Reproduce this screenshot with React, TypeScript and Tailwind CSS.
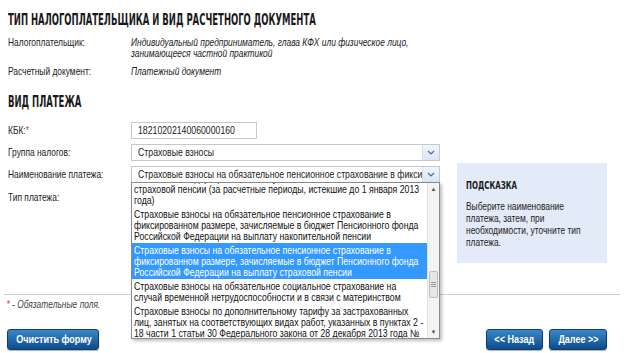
const sans = "font-['Liberation_Sans',Arial,sans-serif]";
const cond = "font-['Liberation_Sans_Narrow','DejaVu_Sans_Condensed',sans-serif] font-bold uppercase whitespace-nowrap origin-left";
// the page text is set narrower than Arial; squeeze each line from its left edge
const sq = "origin-left scale-x-[0.8] whitespace-nowrap";
const sqField = "origin-left scale-x-[0.83] whitespace-nowrap";

function Chevron() {
  return (
    <svg width="8" height="5" viewBox="0 0 8 5" className="block">
      <path d="M1 1 L4 4 L7 1" fill="none" stroke="#3b6ea8" strokeWidth="1.2" />
    </svg>
  );
}

function Select({ value }: { value: string }) {
  return (
    <div className="flex h-[17px] w-[309px] border border-[#c8c8c8] bg-white">
      <div className="flex-1 overflow-hidden pl-[6px] leading-[15px]">
        <div className={sqField}>{value}</div>
      </div>
      <div className="flex w-[17px] items-center justify-center border-l border-[#d4dce6] bg-gradient-to-b from-[#f0f5fb] to-[#dbe6f3]">
        <Chevron />
      </div>
    </div>
  );
}

type Item = { lines: string[]; active?: boolean };

const items: Item[] = [
  {
    lines: [
      "Российской Федерации на выплату",
      "страховой пенсии (за расчетные периоды, истекшие до 1 января 2013",
      "года)",
    ],
  },
  {
    lines: [
      "Страховые взносы на обязательное пенсионное страхование в",
      "фиксированном размере, зачисляемые в бюджет Пенсионного фонда",
      "Российской Федерации на выплату накопительной пенсии",
    ],
  },
  {
    lines: [
      "Страховые взносы на обязательное пенсионное страхование в",
      "фиксированном размере, зачисляемые в бюджет Пенсионного фонда",
      "Российской Федерации на выплату страховой пенсии",
    ],
    active: true,
  },
  {
    lines: [
      "Страховые взносы на обязательное социальное страхование на",
      "случай временной нетрудоспособности и в связи с материнством",
    ],
  },
  {
    lines: [
      "Страховые взносы по дополнительному тарифу за застрахованных",
      "лиц, занятых на соответствующих видах работ, указанных в пунктах 2 -",
      "18 части 1 статьи 30 Федерального закона от 28 декабря 2013 года №",
      "400-ФЗ",
    ],
  },
];

function Dropdown() {
  return (
    <div className="absolute left-0 top-[16px] z-10 flex h-[157px] w-[309px] border border-[#8a8a8a] bg-white shadow-[2px_2px_3px_rgba(0,0,0,0.25)]">
      <div className="flex-1 overflow-hidden">
        <div className="-mt-[12px]">
          {items.map((it, i) => (
            <div
              key={i}
              className={`px-[2px] py-[1.5px] leading-[11px] ${it.active ? "bg-[#3399ff] text-white" : "text-[#111]"}`}
            >
              {it.lines.map((l) => (
                <div key={l} className={sqField}>
                  {l}
                </div>
              ))}
            </div>
          ))}
        </div>
      </div>
      <div className="flex w-[12px] flex-col border-l border-[#e2e2e2] bg-[#f3f3f3]">
        <div className="flex h-[12px] items-center justify-center text-[6px] text-[#555]">▲</div>
        <div className="h-[76px]" />
        <div className="mx-[1px] flex h-[27px] flex-col items-center justify-center gap-[1px] rounded-[2px] border border-[#bdbdbd] bg-[#e6e6e6]">
          <div className="h-px w-[5px] bg-[#999]" />
          <div className="h-px w-[5px] bg-[#999]" />
          <div className="h-px w-[5px] bg-[#999]" />
        </div>
        <div className="flex-1" />
        <div className="flex h-[12px] items-center justify-center text-[6px] text-[#555]">▼</div>
      </div>
    </div>
  );
}

function BlueButton({ children, w }: { children: string; w: string }) {
  return (
    <button
      className={`${w} h-[21px] rounded-[3px] border border-[#0b3f74] bg-gradient-to-b from-[#3a87c9] to-[#0d4c8c] text-[11px] font-bold text-white shadow-[0_1px_1px_rgba(0,0,0,0.3)]`}
    >
      <span className="inline-block scale-x-[0.82] whitespace-nowrap">{children}</span>
    </button>
  );
}

export default function App() {
  return (
    <div className={`relative h-[353px] w-[624px] overflow-hidden bg-white text-[10.5px] text-[#222] ${sans}`}>
      <div className="px-[8px] pt-[11px]">
        <h1 className={`${cond} scale-x-[0.59] text-[16px] leading-[18px] text-[#1a1a1a]`}>
          Тип налогоплательщика и вид расчетного документа
        </h1>

        <div className="mt-[8px] grid grid-cols-[123px_1fr] gap-y-[7px] leading-[11px]">
          <div className={sq}>Налогоплательщик:</div>
          <div className="italic">
            <div className={sq}>Индивидуальный предприниматель, глава КФХ или физическое лицо,</div>
            <div className={sq}>занимающееся частной практикой</div>
          </div>
          <div className={sq}>Расчетный документ:</div>
          <div className={`${sq} italic`}>Платежный документ</div>
        </div>

        <h2 className={`${cond} mt-[16px] scale-x-[0.59] text-[16px] leading-[18px] text-[#1a1a1a]`}>
          Вид платежа
        </h2>
      </div>

      <div className="mt-[11px] flex pl-[8px]">
        <div className="flex w-[432px] flex-col gap-[5px]">
          <div className="flex items-center">
            <div className={`w-[123px] ${sq}`}>
              КБК:<span className="text-[#e23a3a]">*</span>
            </div>
            <div className="h-[17px] w-[126px] border border-[#c8c8c8] pl-[6px] leading-[15px]">
              <div className={sqField}>18210202140060000160</div>
            </div>
          </div>
          <div className="flex items-center">
            <div className={`w-[123px] ${sq}`}>Группа налогов:</div>
            <Select value="Страховые взносы" />
          </div>
          <div className="flex items-center">
            <div className={`w-[123px] ${sq}`}>Наименование платежа:</div>
            <div className="relative">
              <Select value="Страховые взносы на обязательное пенсионное страхование в фиксированном размере" />
              <Dropdown />
            </div>
          </div>
          <div className="flex items-center pt-[2px]">
            <div className={`w-[123px] ${sq}`}>Тип платежа:</div>
          </div>
        </div>

        <div className="ml-[17px] mt-[41px] h-[100px] w-[150px] bg-[#e2ebf7] px-[9px] pt-[16px]">
          <div className={`${cond} scale-x-[0.75] text-[10.5px] leading-[12px] text-[#1a1a1a]`}>
            Подсказка
          </div>
          <div className="mt-[9px] leading-[12px]">
            <div className={sq}>Выберите наименование</div>
            <div className={sq}>платежа, затем, при</div>
            <div className={sq}>необходимости, уточните тип</div>
            <div className={sq}>платежа.</div>
          </div>
        </div>
      </div>

      <div className="mx-[4px] mt-[31px] border-t border-[#d0d0d0]" />

      <div className={`mt-[4px] px-[8px] italic leading-[11px] text-[#444] ${sq}`}>
        <span className="text-[#e23a3a]">*</span> - Обязательные поля.
      </div>

      <div className="mt-[19px] flex items-center justify-between pl-[7px] pr-[17px]">
        <BlueButton w="w-[92px]">Очистить форму</BlueButton>
        <div className="flex gap-[6px]">
          <BlueButton w="w-[57px]">&lt;&lt; Назад</BlueButton>
          <BlueButton w="w-[58px]">Далее &gt;&gt;</BlueButton>
        </div>
      </div>
    </div>
  );
}
